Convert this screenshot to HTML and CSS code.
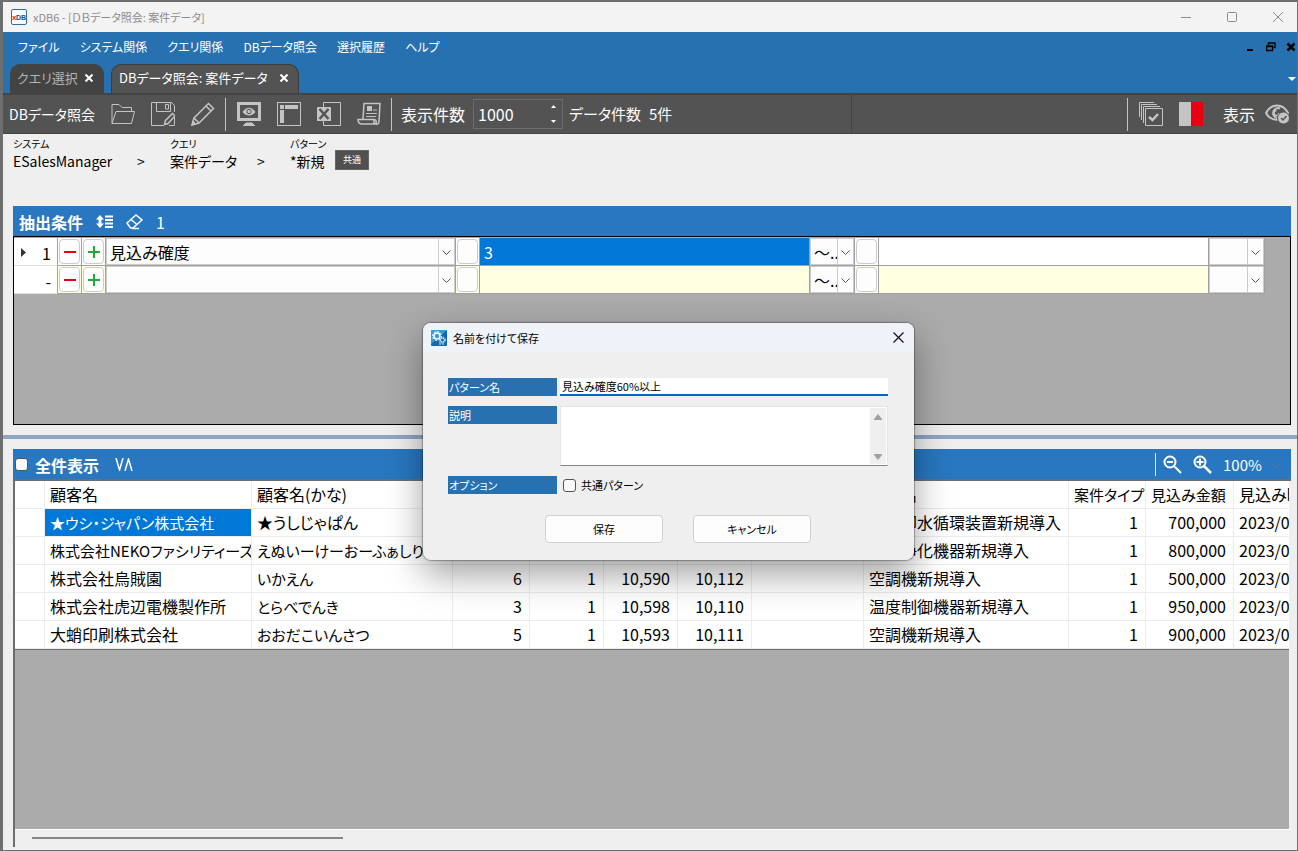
FILE: index.html
```html
<!DOCTYPE html>
<html lang="ja">
<head>
<meta charset="utf-8">
<title>xDB6 - [ＤＢデータ照会: 案件データ]</title>
<link rel="stylesheet" href="styles.css">
</head>
<body>
<div class="window">
  <header class="titlebar">
    <svg class="app-icon" width="16" height="16" viewBox="0 0 16 16">
      <rect x=".5" y=".5" width="15" height="15" rx="1.5" fill="#fff" stroke="#2a6fae"/>
      <text x="1" y="11" class="logo-x">x</text>
      <text x="5" y="11" class="logo-db">DB</text>
    </svg>
    <h1 class="app-title">xDB6 - [ＤＢデータ照会: 案件データ]</h1>
    <div class="caption-buttons">
      <button class="caption" aria-label="最小化"><svg width="10" height="10"><path d="M0 5.5H10" stroke="#8c8c8c"/></svg></button>
      <button class="caption" aria-label="最大化"><svg width="10" height="10"><rect x=".5" y=".5" width="9" height="9" rx="1" fill="none" stroke="#8c8c8c"/></svg></button>
      <button class="caption" aria-label="閉じる"><svg width="10" height="10"><path d="M0 0L10 10M10 0L0 10" stroke="#8c8c8c"/></svg></button>
    </div>
  </header>

  <nav class="menubar">
    <a href="#">ファイル</a>
    <a href="#">システム関係</a>
    <a href="#">クエリ関係</a>
    <a href="#">DBデータ照会</a>
    <a href="#">選択履歴</a>
    <a href="#">ヘルプ</a>
    <div class="mdi-buttons">
      <button aria-label="子ウィンドウ最小化"><svg width="10" height="10"><path d="M1 8H7" stroke="#000" stroke-width="2"/></svg></button>
      <button aria-label="子ウィンドウ復元"><svg width="10" height="10"><path d="M2.5 3V1H9V5.500H7.500M2 1H9.500M.5 4V8.500H6.500V4ZM0 4.500H7" fill="none" stroke="#000" stroke-width="1.300"/></svg></button>
      <button aria-label="子ウィンドウを閉じる"><svg width="10" height="10"><path d="M1.500 1.500L8.500 8.500M8.500 1.500L1.500 8.500" stroke="#000" stroke-width="2.500"/></svg></button>
    </div>
  </nav>

  <div class="tabbar">
    <div class="tab"><span>クエリ選択</span><button aria-label="タブを閉じる"><svg width="8" height="8"><path d="M.5 .5L7.500 7.500M7.500 .5L.5 7.500" stroke="#fff" stroke-width="2"/></svg></button></div>
    <div class="tab tab-active"><span>DBデータ照会: 案件データ</span><button aria-label="タブを閉じる"><svg width="8" height="8"><path d="M.5 .5L7.500 7.500M7.500 .5L.5 7.500" stroke="#fff" stroke-width="2"/></svg></button></div>
    <button class="tab-more" aria-label="タブ一覧"><svg width="8" height="4"><path d="M0 0H8L4 4Z" fill="#fff"/></svg></button>
  </div>

  <div class="toolbar">
    <span class="tool-title">DBデータ照会</span>
    <div class="tools">
      <button aria-label="開く"><svg width="24" height="24" viewBox="0 0 24 24"><path d="M1 21.500V2.500H8L11 5.500H20.500V9.500M1 21.500L5 9.500H23.500L20.500 21.500Z"/></svg></button>
      <button aria-label="名前を付けて保存"><svg width="24" height="24" viewBox="0 0 24 24"><path d="M13 23.500H.5V.5H20.500L23.500 3.500V10M5.500 .5V9.500H19.500V.5M14.500 2.500H17.500V7H14.500ZM23.500 15V23.500H18"/><path d="M13.500 22.500L14.500 18.500L21.500 11.500L24 14L17 21.500Z" stroke-width="1.500"/></svg></button>
      <button aria-label="編集"><svg width="24" height="24" viewBox="0 0 24 24"><path d="M1 23L3 16L17.500 1.500L22.500 6.500L8 21ZM3 16L8 21M15 4L20 9" stroke-width="1.500"/><path d="M1 23L2 19L5 22Z" class="solid"/></svg></button>
    </div>
    <div class="tools">
      <button aria-label="表示"><svg width="24" height="24" viewBox="0 0 24 24"><rect x="1.500" y="1.500" width="21" height="16" stroke-width="3"/><path d="M6 10C9 5 15 5 18 10C15 14 9 14 6 10ZM9 21H15L18 24H6Z" class="solid"/><circle cx="12" cy="9.500" r="2.200" stroke="#535353"/></svg></button>
      <button aria-label="レイアウト"><svg width="24" height="24" viewBox="0 0 24 24"><rect x=".5" y=".5" width="23" height="23"/><path d="M3 3H7V7H3ZM8 3H21V7H8ZM3 8H7V21H3Z" fill="#c4c4c4" stroke="none"/></svg></button>
      <button aria-label="Excel出力"><svg width="24" height="24" viewBox="0 0 24 24"><path d="M6.500 5V.5H23.500V23.500H6.500V19"/><path d="M0 5H14V19H0Z" fill="#c4c4c4" stroke="none"/><path d="M2.500 7L11.500 17M11.500 7L2.500 17" stroke="#535353" stroke-width="2.500"/></svg></button>
      <button aria-label="ログ"><svg width="24" height="24" viewBox="0 0 24 24"><path d="M6 17L7 1.500H23L22 19C22 23 18 23 17 21V17.500H1C1 20 2 22 5 22H19M17 18C20 17 20 22 17 22" stroke-width="1.500"/><path d="M10 4H15V9H10Z" fill="#c4c4c4" stroke="none"/><path d="M16 8H20M9 11.500H20M9 14.500H19"/></svg></button>
    </div>
    <div class="tool-fields">
      <label for="limit">表示件数</label>
      <div class="spinner">
        <input id="limit" type="text" value="1000">
        <div class="spin-buttons">
          <button aria-label="増やす"><svg width="5" height="3"><path d="M2.500 0L5 3H0Z" fill="#fff"/></svg></button>
          <button aria-label="減らす"><svg width="5" height="3"><path d="M0 0H5L2.500 3Z" fill="#fff"/></svg></button>
        </div>
      </div>
      <span class="count-label">データ件数</span>
      <span class="count">5件</span>
    </div>
    <div class="tool-right">
      <div class="right-items">
        <button aria-label="一括選択"><svg width="24" height="24" viewBox="0 0 24 24"><path d="M.5 15V.5H15M2.500 18V2.500H18M4.500 21V4.500H21M6.500 6.500H23.500V23.500H6.500Z"/><path d="M10 15L13.500 18L19 12" stroke-width="2.500"/></svg></button>
        <button aria-label="配色"><svg width="24" height="24" viewBox="0 0 24 24"><path d="M0 0H12V24H0Z" fill="#c4c4c4" stroke="none"/><path d="M12 0H24V24H12Z" fill="#e60012" stroke="none"/></svg></button>
        <span class="view-label">表示</span>
        <button aria-label="表示切替"><svg width="24" height="24" viewBox="0 0 24 24"><path d="M1 11C6 1 18 1 23 11C18 20 6 20 1 11Z" stroke-width="2"/><path d="M15 6.500A5 5 0 1 0 12 16" stroke-width="2"/><path d="M11.500 8.500A2.500 2.500 0 1 0 14 11" stroke-width="1.500"/><circle cx="18.500" cy="16" r="6" class="solid"/><path d="M16 16L18 18L21.500 14" stroke="#535353" stroke-width="1.500"/></svg></button>
      </div>
    </div>
  </div>

  <main class="content">
    <div class="crumbs">
      <div class="crumb"><small>システム</small><span>ESalesManager</span></div>
      <span class="crumb-sep">&gt;</span>
      <div class="crumb crumb-query"><small>クエリ</small><span>案件データ</span></div>
      <span class="crumb-sep">&gt;</span>
      <div class="crumb crumb-pattern"><small>パターン</small><span>*新規</span></div>
      <span class="badge">共通</span>
    </div>

    <section class="conditions">
      <div class="section-head">
        <h2>抽出条件</h2>
        <button aria-label="並べ替え"><svg width="17" height="14" viewBox="0 0 17 14"><path d="M4 0L8 4.500H5.500V8.500H8L4 13L0 8.500H2.500V4.500H0Z" fill="#fff"/><path d="M9 1.500H17M9 5H17M9 8.500H17M9 12H17" stroke="#fff" stroke-width="2"/></svg></button>
        <button aria-label="消去"><svg width="17" height="16" viewBox="0 0 17 16"><path d="M1 9L10 1L16 6L7 14H4.500ZM5 5.500L11 10.500M6 14.500H13" fill="none" stroke="#fff" stroke-width="1.500"/></svg></button>
        <span>1</span>
      </div>
      <div class="cond-body">
        <table class="cond-grid">
          <colgroup><col class="w-head"><col class="w-btn"><col class="w-btn"><col class="w-field"><col class="w-btn"><col class="w-value"><col class="w-op"><col class="w-btn"><col class="w-value"><col class="w-join"></colgroup>
          <tr>
            <th scope="row"><div class="row-head"><svg width="5" height="9"><path d="M0 0L5 4.500L0 9Z" fill="#333"/></svg><span>1</span></div></th>
            <td><button class="mini" aria-label="条件を削除"><svg width="12" height="12"><path d="M0 6H12" stroke="#e60012" stroke-width="2"/></svg></button></td>
            <td><button class="mini" aria-label="条件を追加"><svg width="12" height="12"><path d="M0 6H12M6 0V12" stroke="#22a93c" stroke-width="2"/></svg></button></td>
            <td><div class="combo"><select aria-label="項目"><option>見込み確度</option></select><svg class="chev" width="9" height="6"><path d="M.5 .5L4.500 4.500L8.500 .5"/></svg></div></td>
            <td><button class="mini" aria-label="値の選択"></button></td>
            <td><input class="cell-input selected" aria-label="開始値" value="3"></td>
            <td><div class="combo"><select aria-label="演算子"><option>～..</option></select><svg class="chev" width="9" height="6"><path d="M.5 .5L4.500 4.500L8.500 .5"/></svg></div></td>
            <td><button class="mini" aria-label="終了値の選択"></button></td>
            <td><input class="cell-input" aria-label="終了値"></td>
            <td><div class="combo"><select aria-label="結合"><option></option></select><svg class="chev" width="9" height="6"><path d="M.5 .5L4.500 4.500L8.500 .5"/></svg></div></td>
          </tr>
          <tr class="new-row">
            <th scope="row"><div class="row-head"><span>-</span></div></th>
            <td><button class="mini" aria-label="条件を削除"><svg width="12" height="12"><path d="M0 6H12" stroke="#e60012" stroke-width="2"/></svg></button></td>
            <td><button class="mini" aria-label="条件を追加"><svg width="12" height="12"><path d="M0 6H12M6 0V12" stroke="#22a93c" stroke-width="2"/></svg></button></td>
            <td><div class="combo"><select aria-label="項目"><option></option></select><svg class="chev" width="9" height="6"><path d="M.5 .5L4.500 4.500L8.500 .5"/></svg></div></td>
            <td><button class="mini" aria-label="値の選択"></button></td>
            <td><input class="cell-input" aria-label="開始値"></td>
            <td><div class="combo"><select aria-label="演算子"><option>～..</option></select><svg class="chev" width="9" height="6"><path d="M.5 .5L4.500 4.500L8.500 .5"/></svg></div></td>
            <td><button class="mini" aria-label="終了値の選択"></button></td>
            <td><input class="cell-input" aria-label="終了値"></td>
            <td><div class="combo"><select aria-label="結合"><option></option></select><svg class="chev" width="9" height="6"><path d="M.5 .5L4.500 4.500L8.500 .5"/></svg></div></td>
          </tr>
        </table>
      </div>
    </section>

    <div class="splitter"></div>

    <section class="results">
      <div class="section-head results-head">
        <input type="checkbox" id="show-all" class="check check-head">
        <label for="show-all">全件表示</label>
        <button aria-label="折りたたみ"><svg width="18" height="13"><path d="M1 0L4.500 12L8 0M10 13L13.500 1L17 13" fill="none" stroke="#fff" stroke-width="1.500"/></svg></button>
        <div class="zoom">
          <button aria-label="縮小"><svg width="19" height="19" viewBox="0 0 19 19"><circle cx="7" cy="7" r="5.500" fill="none" stroke="#fff" stroke-width="2"/><path d="M4 7H10M11 11L18 18" stroke="#fff" stroke-width="2"/></svg></button>
          <button aria-label="拡大"><svg width="19" height="19" viewBox="0 0 19 19"><circle cx="7" cy="7" r="5.500" fill="none" stroke="#fff" stroke-width="2"/><path d="M3.500 7H10.500M7 3.500V10.500" stroke="#fff" stroke-width="2"/><path d="M11 11L18 18" stroke="#fff" stroke-width="2.500"/></svg></button>
          <div class="combo zoom-select"><select aria-label="表示倍率"><option>100%</option></select><svg class="chev" width="9" height="6"><path d="M.5 .5L4.500 4.500L8.500 .5"/></svg></div>
        </div>
      </div>
      <div class="results-body">
        <div class="grid-view">
          <table class="data-grid">
            <colgroup><col class="c-head"><col class="c-name"><col class="c-kana"><col class="c-a"><col class="c-b"><col class="c-b"><col class="c-b"><col class="c-c"><col class="c-case"><col class="c-a"><col class="c-amount"><col class="c-date"></colgroup>
            <thead><tr><th></th><th>顧客名</th><th>顧客名(かな)</th><th></th><th></th><th></th><th></th><th></th><th>案件名</th><th class="long">案件タイプ</th><th class="long">見込み金額</th><th>見込み時期</th></tr></thead>
            <tbody>
              <tr><td></td><td class="picked long">★ウシ・ジャパン株式会社</td><td>★うしじゃぱん</td><td></td><td></td><td></td><td></td><td></td><td>大冷却水循環装置新規導入</td><td class="num">1</td><td class="num">700,000</td><td>2023/09</td></tr>
              <tr><td></td><td class="long">株式会社NEKOファシリティーズ</td><td class="long">えぬいーけーおーふぁしりてぃ</td><td></td><td></td><td></td><td></td><td></td><td>空気浄化機器新規導入</td><td class="num">1</td><td class="num">800,000</td><td>2023/09</td></tr>
              <tr><td></td><td>株式会社烏賊園</td><td class="long">いかえん</td><td class="num">6</td><td class="num">1</td><td class="num">10,590</td><td class="num">10,112</td><td></td><td>空調機新規導入</td><td class="num">1</td><td class="num">500,000</td><td>2023/09</td></tr>
              <tr><td></td><td>株式会社虎辺電機製作所</td><td class="long">とらべでんき</td><td class="num">3</td><td class="num">1</td><td class="num">10,598</td><td class="num">10,110</td><td></td><td>温度制御機器新規導入</td><td class="num">1</td><td class="num">950,000</td><td>2023/09</td></tr>
              <tr><td></td><td>大蛸印刷株式会社</td><td class="long">おおだこいんさつ</td><td class="num">5</td><td class="num">1</td><td class="num">10,593</td><td class="num">10,111</td><td></td><td>空調機新規導入</td><td class="num">1</td><td class="num">900,000</td><td>2023/09</td></tr>
            </tbody>
          </table>
        </div>
        <div class="hscroll"><div class="thumb"></div></div>
      </div>
    </section>
  </main>

  <div class="dialog" role="dialog" aria-labelledby="dialog-title">
    <div class="dialog-head">
      <svg width="16" height="16" viewBox="0 0 16 16"><rect width="16" height="16" rx="1" fill="#0b69b5"/><path d="M0 0H16L0 14Z" fill="#3a9bdc"/><circle cx="6" cy="6" r="3" fill="none" stroke="#fff" stroke-width="1.500"/><circle cx="6" cy="6" r="4.500" fill="none" stroke="#fff" stroke-dasharray="1.800 1.700"/><circle cx="11.500" cy="10" r="2" fill="none" stroke="#e4f2fc"/><circle cx="11.500" cy="10" r="3" fill="none" stroke="#e4f2fc" stroke-dasharray="1.200 1.200"/><path d="M9 12V15M12 13V15" stroke="#cfe8fa"/></svg>
      <h2 id="dialog-title">名前を付けて保存</h2>
      <button class="dialog-close" aria-label="閉じる"><svg width="11" height="11"><path d="M.5 .5L10.500 10.500M10.500 .5L.5 10.500" stroke="#111" stroke-width="1.200"/></svg></button>
    </div>
    <form class="dialog-form">
      <label class="tag" for="pname">パターン名</label>
      <input id="pname" class="text-name" type="text" value="見込み確度60%以上">
      <label class="tag" for="desc">説明</label>
      <div class="memo">
        <textarea id="desc"></textarea>
        <div class="memo-bar"><svg width="8" height="6"><path d="M4 0L8 5V6H0V5Z" fill="#a0a0a0"/></svg><svg width="8" height="6"><path d="M0 0H8V1L4 6L0 1Z" fill="#a0a0a0"/></svg></div>
      </div>
      <span class="tag">オプション</span>
      <div class="option"><input type="checkbox" id="shared" class="check"><label for="shared">共通パターン</label></div>
    </form>
    <div class="dialog-actions">
      <button class="push">保存</button>
      <button class="push">キャンセル</button>
    </div>
  </div>
</div>
</body>
</html>
```
FILE: styles.css
```css
* { box-sizing: border-box; }
body {
  margin: 0;
  height: 100vh;
  overflow: hidden;
  background: #777;
  font-family: "Noto Sans CJK JP", "Noto Sans", sans-serif;
  font-feature-settings: "palt";
  font-size: 16px;
  line-height: 24px;
  color: #000;
}
h1, h2 { margin: 0; font-weight: 400; font-size: inherit; }
button { padding: 0; border: 0; background: none; font: inherit; color: inherit; display: grid; place-items: center; }
input, select, textarea { font: inherit; color: inherit; font-feature-settings: inherit; }
svg { display: block; }

.window {
  position: relative;
  height: 100%;
  display: flex;
  flex-direction: column;
  border: solid #6e6e6e;
  border-width: 2px 1px 1px 3px;
  background: #efefef;
}

.titlebar { flex: none; display: flex; align-items: center; height: 30px; padding-left: 8px; background: #f3f3f3; }
.app-title { margin-left: 6px; font-size: 11px; color: #8c8c8c; }
.logo-x, .logo-db { font-family: "Liberation Sans", sans-serif; font-weight: 700; }
.logo-x { font-size: 8px; fill: #e02020; }
.logo-db { font-size: 7px; fill: #174f86; }
.caption-buttons { display: flex; gap: 36px; margin-left: auto; padding-right: 14px; }
.caption { width: 10px; height: 30px; }

.menubar { flex: none; display: flex; align-items: center; gap: 20px; height: 30px; padding-left: 15px; background: #2771b1; font-size: 12px; }
.menubar a { color: #fff; text-decoration: none; white-space: nowrap; }
.mdi-buttons { display: flex; gap: 10px; margin-left: auto; padding-right: 1px; }

.tabbar { flex: none; display: flex; align-items: flex-end; gap: 7px; height: 33px; padding-left: 7px; background: #2771b1; border-bottom: 2px solid #444; }
.tab { display: flex; align-items: center; justify-content: space-between; width: 94px; height: 29px; padding: 0 11px 2px 7px; border-radius: 10px 10px 0 0; background: #434343; color: #b4b4b4; font-size: 13px; white-space: nowrap; }
.tab-active { width: 188px; padding-right: 10px; border: 1px solid #3d3d3d; border-bottom: 0; background: #535353; color: #fff; }
.tab-more { margin-left: auto; height: 29px; padding-right: 1px; }

.toolbar { flex: none; display: flex; align-items: center; height: 39px; padding-left: 6px; background: #535353; border-bottom: 1px solid #444; color: #fff; font-size: 16px; }
.toolbar svg { fill: none; stroke: #c4c4c4; }
.toolbar .solid { fill: #c4c4c4; }
.toolbar circle.solid { stroke: #535353; }
.toolbar .spin-buttons svg { stroke: none; }
.tool-title { width: 96px; font-size: 14px; white-space: nowrap; }
.tools { display: flex; align-items: center; gap: 16px; height: 33px; padding: 0 10px 0 6px; border-right: 1px solid #c4c4c4; }
.tools + .tools { padding-left: 11px; }
.tool-fields { display: flex; align-items: center; align-self: stretch; width: 460px; padding-left: 9px; border-right: 1px solid #444; white-space: nowrap; }
.spinner { display: flex; width: 90px; height: 30px; margin: 0 6px 0 8px; border: 1px solid #6c6c6c; }
.spinner input { flex: 1; min-width: 0; padding: 0 4px; border: 0; background: none; }
.spin-buttons { display: flex; flex-direction: column; justify-content: space-between; padding: 5px 6px; }
.count-label { font-size: 15px; }
.count { margin-left: 8px; font-size: 15px; }
.tool-right { flex: 1; display: flex; justify-content: flex-end; }
.right-items { display: flex; align-items: center; gap: 16px; height: 33px; padding: 0 8px 0 11px; border-left: 1px solid #c4c4c4; }
.view-label { margin: 0 -6px 0 4px; }

.content { flex: 1; min-height: 0; display: flex; flex-direction: column; }
.crumbs { display: flex; align-items: flex-end; height: 72px; padding: 0 10px 36px; font-size: 14px; }
.crumb { display: flex; flex-direction: column; width: 119px; line-height: 18px; white-space: nowrap; }
.crumb small { font-size: 10px; line-height: 16px; }
.crumb-query { width: 82px; }
.crumb-pattern { width: 45px; }
.crumb-sep { width: 38px; line-height: 18px; padding-left: 5px; }
.badge { width: 34px; height: 20px; border: 1px solid #666; background: #505050; color: #fff; font-size: 9px; line-height: 18px; text-align: center; }

.conditions, .results { margin: 0 6px 0 10px; }
.section-head { display: flex; align-items: center; height: 30px; padding: 1px 0 0 6px; gap: 13px; background: #2877c0; color: #fff; }
.section-head h2, .section-head label { font-weight: 700; }
.cond-body { height: 189px; padding-top: 1px; overflow: hidden; border: 1px solid #000; background: #ababab; }
.cond-grid, .data-grid { table-layout: fixed; border-collapse: separate; border-spacing: 0; }
.cond-grid { width: 1251px; }
.cond-grid th, .cond-grid td { height: 28px; padding: 0; border: solid #a0a0a0; border-width: 0 1px 1px 0; background: #fff; font-weight: 400; }
.cond-grid th { border-bottom-color: #e0e0e0; }
.cond-grid .new-row td { background: #ffffe1; }
.w-head { width: 44px; }
.w-btn { width: 24px; }
.w-field { width: 350px; }
.w-value { width: 330px; }
.w-op { width: 45px; }
.w-join { width: 56px; }
.row-head { display: flex; align-items: center; justify-content: space-between; padding: 2px 6px 0 7px; }
.row-head span { margin-left: auto; }
.mini { width: 21px; height: 25px; margin: 0 1px; border: 1px solid #ccc; border-radius: 4px; background: #fdfdfd; }
.combo { display: grid; height: 27px; border: 1px solid #ccc; background: #fdfdfd; }
.combo select { grid-area: 1 / 1; width: 100%; height: 25px; padding: 0 0 0 3px; border: 0; background: none; appearance: none; }
.chev { grid-area: 1 / 1; justify-self: end; align-self: stretch; box-sizing: content-box; height: 6px; padding: 11px 3px 8px; border-left: 1px solid #ccc; fill: none; stroke: #555; pointer-events: none; }
.cell-input { display: block; width: 100%; height: 27px; padding: 0 4px; border: 0; background: none; }
.selected { background: #0078d7; color: #fff; }

.splitter { flex: none; height: 4px; margin: 10px 0; background: #8ea5c6; }

.results { flex: 1; min-height: 0; display: flex; flex-direction: column; margin-bottom: 3px; }
.results-head { flex: none; padding-left: 2px; gap: 0; }
.results-head label { margin: 0 16px 0 7px; }
.check { appearance: none; width: 13px; height: 13px; margin: 0; border: 1px solid #555; border-radius: 3px; background: #fafafa; }
.zoom { display: flex; align-items: center; gap: 11px; height: 23px; margin-left: auto; padding: 0 8px 0 7px; border-left: 1px solid #dce8f3; font-size: 15px; }
.zoom-select { width: 60px; height: 25px; border: 0; background: none; }
.zoom-select select { padding: 0; }
.zoom-select .chev { border: 0; stroke: #56789a; }
.results-body { flex: 1; min-height: 0; display: flex; flex-direction: column; border: solid #6e6e6e; border-width: 2px 0 0 2px; background: #efefef; }
.grid-view { flex: 1; min-height: 0; margin-right: 2px; overflow: hidden; background: #ababab; }
.data-grid { width: 1325px; border-bottom: 1px solid #6e6e6e; }
.data-grid th, .data-grid td { height: 28px; padding: 0 6px 0 5px; overflow: hidden; border: solid #ececec; border-width: 0 1px 1px 0; background: #fff; font-weight: 400; line-height: 27px; text-align: left; white-space: nowrap; }
.data-grid .num { padding-right: 7px; text-align: right; }
.data-grid .long { padding-right: 0; font-size: 15px; }
.data-grid .picked { background: #0078d7; color: #fff; }
.c-head { width: 30px; }
.c-name { width: 207px; }
.c-kana { width: 201px; }
.c-a { width: 77px; }
.c-b { width: 74px; }
.c-c { width: 112px; }
.c-case { width: 205px; }
.c-amount { width: 88px; }
.c-date { width: 106px; }
.hscroll { flex: none; height: 18px; padding: 7px 17px; border-top: 1px solid #fff; }
.thumb { width: 25%; height: 2px; background: #858585; }

.dialog {
  position: absolute;
  left: 420px;
  top: 321px;
  width: 491px;
  padding-bottom: 17px;
  border-radius: 8px;
  background: #efefef;
  box-shadow: 0 0 1px 1px rgba(0, 0, 0, .3), 0 14px 36px rgba(0, 0, 0, .38);
  font-size: 11px;
  line-height: 18px;
}
.dialog-head { display: flex; align-items: center; gap: 6px; height: 29px; padding: 0 10px 0 8px; border-radius: 8px 8px 0 0; background: #f0f2f9; }
.dialog-close { margin-left: auto; }
.dialog-form { display: grid; grid-template-columns: 109px 1fr; gap: 10px 3px; align-items: start; padding: 26px 26px 0 25px; }
.tag { height: 18px; padding-left: 1px; background: #2771b1; color: #fff; }
.text-name { width: 100%; height: 18px; padding: 0 2px; border: 0; border-bottom: 2px solid #0067c0; background: #fff; }
.memo { display: flex; height: 60px; border: 1px solid #e4e4e4; border-bottom-color: #858585; background: #fff; }
.memo textarea { flex: 1; min-width: 0; border: 0; resize: none; background: none; }
.memo-bar { display: flex; flex-direction: column; justify-content: space-between; width: 16px; margin: 1px; padding: 6px 4px 4px; background: #efefef; }
.option { display: flex; align-items: center; gap: 5px; padding-left: 3px; }
.dialog-actions { display: flex; justify-content: center; gap: 30px; margin-top: 21px; padding-left: 19px; }
.push { width: 118px; height: 28px; border: 1px solid #d0d0d0; border-radius: 4px; background: #fdfdfd; }
```
